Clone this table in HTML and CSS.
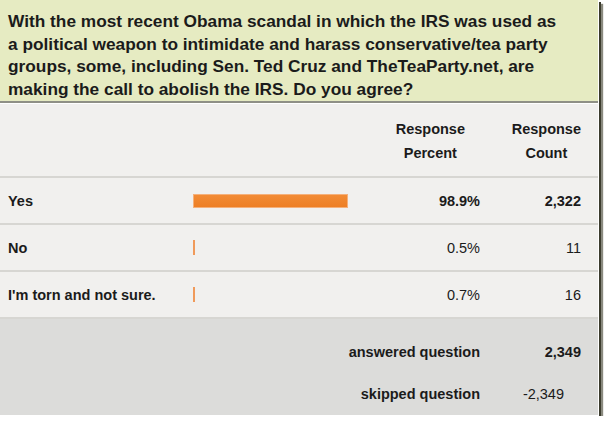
FILE: index.html
```html
<!DOCTYPE html>
<html>
<head>
<meta charset="utf-8">
<link rel="stylesheet" href="styles.css">
</head>
<body>
<div class="frame">
  <div class="question">With the most recent Obama scandal in which the IRS was used as a political weapon to intimidate and harass conservative/tea party groups, some, including Sen. Ted Cruz and TheTeaParty.net, are making the call to abolish the IRS. Do you agree?</div>
  <div class="table">
    <div class="row head">
      <div class="label"></div>
      <div class="bar-cell"></div>
      <div class="num hpct">Response<br>Percent</div>
      <div class="num hcnt">Response<br>Count</div>
    </div>
    <div class="row">
      <div class="label">Yes</div>
      <div class="bar-cell"><div class="bar" style="width:155px"></div></div>
      <div class="num strong">98.9%</div>
      <div class="num strong">2,322</div>
    </div>
    <div class="row">
      <div class="label">No</div>
      <div class="bar-cell"><div class="bar thin" style="width:2px"></div></div>
      <div class="num">0.5%</div>
      <div class="num">11</div>
    </div>
    <div class="row">
      <div class="label">I'm torn and not sure.</div>
      <div class="bar-cell"><div class="bar thin" style="width:2px"></div></div>
      <div class="num">0.7%</div>
      <div class="num">16</div>
    </div>
    <div class="foot">
      <div class="frow">
        <div class="flabel">answered question</div>
        <div class="num strong">2,349</div>
      </div>
      <div class="frow">
        <div class="flabel">skipped question</div>
        <div class="num skipped">-2,349</div>
      </div>
    </div>
  </div>
</div>
</body>
</html>
```
FILE: styles.css
```css
html, body {
  margin: 0;
  padding: 0;
  background: #ffffff;
}
body {
  font-family: "Liberation Sans", Arial, sans-serif;
  color: #1b1b1b;
}
.frame {
  width: 598px;
  height: 415px;
  border-right: 1px solid #ffffff;
  border-bottom: 1px solid #ffffff;
  box-shadow: 2px 2px 0 #3c3c2e, 4px 4px 1px rgba(40, 40, 20, 0.55);
  display: flex;
  flex-direction: column;
  overflow: hidden;
}
.question {
  background: #e6ebc2;
  font-size: 17.3px;
  font-weight: bold;
  line-height: 22.5px;
  padding: 10px 32px 1px 8px;
  height: 90px;
  border-bottom: 2px solid #8f9086;
}
.table {
  flex: 1;
  display: flex;
  flex-direction: column;
  background: #f1f0ee;
  border-top: 1px solid #ffffff;
}
.row {
  display: grid;
  grid-template-columns: 185px 1fr 110px 101px;
  align-items: center;
  padding: 0 17px 0 8px;
  height: 45px;
  border-bottom: 2px solid #d7d6d2;
  font-size: 14.5px;
}
.row.head {
  height: 72px;
}
.label {
  font-weight: bold;
}
.num {
  text-align: right;
}
.strong {
  font-weight: bold;
}
.head .num {
  font-weight: bold;
  text-align: center;
  line-height: 24px;
  justify-self: end;
  padding-top: 1px;
}
.hpct {
  margin-right: 15px;
}
.bar {
  box-sizing: border-box;
  height: 14px;
  background: linear-gradient(#f28b35, #ed7f25);
  border: 1px solid #f5b07a;
}
.bar.thin {
  height: 15px;
  border: none;
  background: #f09a5a;
}
.foot {
  flex: 1;
  background: #dcdcda;
  padding: 12px 17px 0 8px;
}
.frow {
  display: grid;
  grid-template-columns: 1fr 101px;
  height: 42px;
  align-items: center;
  font-size: 14.5px;
}
.flabel {
  font-weight: bold;
  text-align: right;
}
.skipped {
  padding-right: 17px;
}
```
